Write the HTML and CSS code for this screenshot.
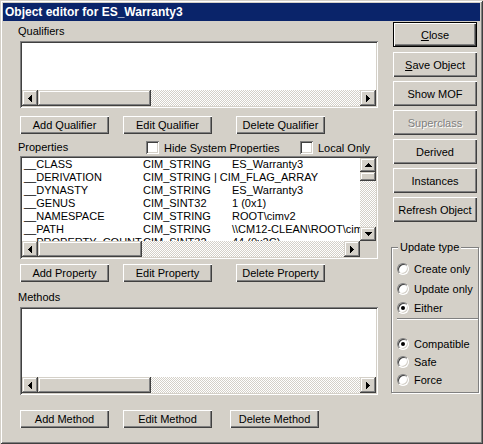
FILE: index.html
```html
<!DOCTYPE html>
<html>
<head>
<meta charset="utf-8">
<link rel="stylesheet" href="styles.css">
</head>
<body>
<div class="window">
  <div class="titlebar">Object editor for ES_Warranty3</div>
  <div class="client">
    <div class="leftcol">
      <div class="label lbl-q">Qualifiers</div>
      <div class="listbox lb-q">
        <div class="content"></div>
        <div class="hscroll">
          <div class="sbtn"><svg width="4" height="7" viewBox="0 0 4 7"><path d="M3 0h1v7h-1zM2 1h1v5h-1zM1 2h1v3h-1zM0 3h1v1h-1z"/></svg></div>
          <div class="thumb thumb-h"></div>
          <div class="track"></div>
          <div class="sbtn"><svg width="4" height="7" viewBox="0 0 4 7"><path d="M0 0h1v7H0zM1 1h1v5H1zM2 2h1v3H2zM3 3h1v1H3z"/></svg></div>
        </div>
      </div>
      <div class="btnrow row-q">
        <div class="btn b1">Add Qualifier</div>
        <div class="btn b2">Edit Qualifier</div>
        <div class="btn b3">Delete Qualifier</div>
      </div>
      <div class="prophead">
        <div class="label lbl-p">Properties</div>
        <div class="check ch1"><span class="box"></span><span>Hide System Properties</span></div>
        <div class="check"><span class="box"></span><span>Local Only</span></div>
      </div>
      <div class="listbox lb-p">
        <div class="content rows">
          <div class="row"><span class="c1">__CLASS</span><span class="c2">CIM_STRING</span><span class="c3">ES_Warranty3</span></div>
          <div class="row"><span class="c1">__DERIVATION</span><span class="c2">CIM_STRING | CIM_FLAG_ARRAY</span><span class="c3"></span></div>
          <div class="row"><span class="c1">__DYNASTY</span><span class="c2">CIM_STRING</span><span class="c3">ES_Warranty3</span></div>
          <div class="row"><span class="c1">__GENUS</span><span class="c2">CIM_SINT32</span><span class="c3">1 (0x1)</span></div>
          <div class="row"><span class="c1">__NAMESPACE</span><span class="c2">CIM_STRING</span><span class="c3">ROOT\cimv2</span></div>
          <div class="row"><span class="c1">__PATH</span><span class="c2">CIM_STRING</span><span class="c3">\\CM12-CLEAN\ROOT\cimv2:ES_Warranty3</span></div>
          <div class="row"><span class="c1">__PROPERTY_COUNT</span><span class="c2">CIM_SINT32</span><span class="c3">44 (0x2C)</span></div>
        </div>
        <div class="vscroll">
          <div class="sbtn vbtn"><svg width="7" height="4" viewBox="0 0 7 4"><path d="M3 0h1v1H3zM2 1h3v1H2zM1 2h5v1H1zM0 3h7v1H0z"/></svg></div>
          <div class="thumb thumb-v"></div>
          <div class="track"></div>
          <div class="sbtn vbtn"><svg width="7" height="4" viewBox="0 0 7 4"><path d="M0 0h7v1H0zM1 1h5v1H1zM2 2h3v1H2zM3 3h1v1H3z"/></svg></div>
        </div>
        <div class="hscroll">
          <div class="sbtn"><svg width="4" height="7" viewBox="0 0 4 7"><path d="M3 0h1v7h-1zM2 1h1v5h-1zM1 2h1v3h-1zM0 3h1v1h-1z"/></svg></div>
          <div class="thumb thumb-hp"></div>
          <div class="track"></div>
          <div class="sbtn"><svg width="4" height="7" viewBox="0 0 4 7"><path d="M0 0h1v7H0zM1 1h1v5H1zM2 2h1v3H2zM3 3h1v1H3z"/></svg></div>
        </div>
        <div class="corner"></div>
      </div>
      <div class="btnrow row-p">
        <div class="btn b1">Add Property</div>
        <div class="btn b2">Edit Property</div>
        <div class="btn b3">Delete Property</div>
      </div>
      <div class="label lbl-m">Methods</div>
      <div class="listbox lb-m">
        <div class="content"></div>
        <div class="hscroll">
          <div class="sbtn"><svg width="4" height="7" viewBox="0 0 4 7"><path d="M3 0h1v7h-1zM2 1h1v5h-1zM1 2h1v3h-1zM0 3h1v1h-1z"/></svg></div>
          <div class="thumb thumb-h"></div>
          <div class="track"></div>
          <div class="sbtn"><svg width="4" height="7" viewBox="0 0 4 7"><path d="M0 0h1v7H0zM1 1h1v5H1zM2 2h1v3H2zM3 3h1v1H3z"/></svg></div>
        </div>
      </div>
      <div class="btnrow row-m">
        <div class="btn b1">Add Method</div>
        <div class="btn b2">Edit Method</div>
        <div class="btn b3m">Delete Method</div>
      </div>
    </div>
    <div class="rightcol">
      <div class="btn rbtn default"><span><u>C</u>lose</span></div>
      <div class="btn rbtn first"><span><u>S</u>ave Object</span></div>
      <div class="btn rbtn">Show MOF</div>
      <div class="btn rbtn disabled">Superclass</div>
      <div class="btn rbtn">Derived</div>
      <div class="btn rbtn">Instances</div>
      <div class="btn rbtn">Refresh Object</div>
      <div class="group">
        <span class="legend">Update type</span>
        <div class="radio r1"><span class="dot"></span><span>Create only</span></div>
        <div class="radio r2"><span class="dot"></span><span>Update only</span></div>
        <div class="radio r3"><span class="dot on"></span><span>Either</span></div>
        <div class="sep"></div>
        <div class="radio r4"><span class="dot on"></span><span>Compatible</span></div>
        <div class="radio r5"><span class="dot"></span><span>Safe</span></div>
        <div class="radio r5"><span class="dot"></span><span>Force</span></div>
      </div>
    </div>
  </div>
</div>
</body>
</html>
```
FILE: styles.css
```css
* { box-sizing: border-box; }
html, body { margin: 0; padding: 0; }
body {
  width: 483px;
  height: 444px;
  overflow: hidden;
  background: #d4d0c8;
  font-family: "Liberation Sans", Arial, sans-serif;
  font-size: 11px;
  color: #000;
}
.window {
  width: 483px;
  height: 444px;
  padding: 3px;
  background: #d4d0c8;
  box-shadow: inset 1px 1px 0 #d4d0c8, inset -1px -1px 0 #404040,
              inset 2px 2px 0 #fff, inset -2px -2px 0 #808080;
}
.titlebar {
  height: 18px;
  line-height: 18px;
  padding-left: 2px;
  background: #0a246a;
  color: #fff;
  font-weight: bold;
  font-size: 12px;
  white-space: nowrap;
}
.client {
  display: flex;
  padding-left: 15px;
}
.leftcol {
  width: 360px;
  display: flex;
  flex-direction: column;
}
.label {
  height: 13px;
  line-height: 13px;
  white-space: nowrap;
}
.lbl-q { margin-top: 4px; }
.lbl-m { margin-top: 9px; }

.listbox {
  margin-left: 2px;
  width: 358px;
  background: #fff;
  padding: 2px;
  box-shadow: inset 1px 1px 0 #808080, inset -1px -1px 0 #fff,
              inset 2px 2px 0 #404040, inset -2px -2px 0 #d4d0c8;
  display: grid;
}
.lb-q { margin-top: 3px; height: 67px; grid-template-rows: 1fr 16px; }
.lb-m { margin-top: 3px; height: 88px; grid-template-rows: 1fr 16px; }
.lb-p {
  margin-top: 2px;
  height: 103px;
  grid-template-columns: 1fr 16px;
  grid-template-rows: 1fr 16px;
}
.content { background: #fff; overflow: hidden; }

.hscroll { display: flex; height: 16px; }
.vscroll { display: flex; flex-direction: column; width: 16px; }
.sbtn, .thumb {
  background: #d4d0c8;
  box-shadow: inset -1px -1px 0 #404040, inset 1px 1px 0 #d4d0c8,
              inset -2px -2px 0 #808080, inset 2px 2px 0 #fff;
}
.sbtn {
  width: 16px;
  height: 16px;
  flex: none;
  display: flex;
  align-items: center;
  justify-content: center;
}
.sbtn svg { display: block; shape-rendering: crispEdges; fill: #000; }
.vbtn { height: 14px; }
.thumb { flex: none; }
.thumb-h { width: 113px; }
.thumb-hp { width: 104px; }
.thumb-v { height: 9px; width: 16px; }
.track {
  flex: 1;
  background: repeating-conic-gradient(#fff 0 25%, #d4d0c8 0 50%) 0 0 / 2px 2px;
}
.corner { background: #d4d0c8; }

.rows { padding-left: 2px; }
.row {
  display: flex;
  height: 13px;
  line-height: 13px;
  white-space: nowrap;
}
.c1 { width: 119px; flex: none; }
.c2 { width: 89px; flex: none; }
.c3 { flex: none; }

.btnrow { display: flex; margin-left: 2px; }
.row-q { margin-top: 8px; }
.row-p { margin-top: 5px; }
.row-m { margin-top: 15px; }
.btn {
  height: 18px;
  display: flex;
  align-items: center;
  justify-content: center;
  white-space: nowrap;
  background: #d4d0c8;
  box-shadow: inset 1px 1px 0 #fff, inset -1px -1px 0 #404040,
              inset -2px -2px 0 #808080;
}
.b1, .b2, .b3, .b3m { width: 89px; flex: none; }
.b2 { margin-left: 14px; }
.b3 { margin-left: 24px; }
.b3m { margin-left: 18px; }

.prophead {
  display: flex;
  margin-top: 7px;
  height: 13px;
}
.lbl-p { width: 128px; }
.check {
  display: flex;
  align-items: center;
  white-space: nowrap;
  height: 13px;
}
.ch1 { width: 154px; }
.box {
  width: 13px;
  height: 13px;
  margin-right: 5px;
  background: #fff;
  box-shadow: inset 1px 1px 0 #808080, inset -1px -1px 0 #fff,
              inset 2px 2px 0 #404040, inset -2px -2px 0 #d4d0c8;
}

.rightcol {
  width: 88px;
  margin-left: 13px;
  display: flex;
  flex-direction: column;
}
.rbtn {
  width: 84px;
  height: 25px;
  margin-left: 2px;
  margin-top: 4px;
}
.rbtn.default {
  margin-top: 1px;
  box-shadow: inset 0 0 0 1px #000, inset 2px 2px 0 #fff,
              inset -2px -2px 0 #404040, inset -3px -3px 0 #808080;
}
.rbtn.first { margin-top: 5px; }
.rbtn.disabled {
  color: #808080;
  text-shadow: 1px 1px 0 #fff;
}

.group {
  position: relative;
  margin-top: 25px;
  width: 88px;
  height: 146px;
  border: 1px solid #808080;
  box-shadow: inset 1px 1px 0 #fff, 1px 1px 0 #fff;
  padding: 13px 0 0 5px;
}
.legend {
  position: absolute;
  left: 6px;
  top: -7px;
  padding: 0 2px;
  background: #d4d0c8;
  line-height: 13px;
  white-space: nowrap;
}
.radio {
  display: flex;
  align-items: center;
  height: 16px;
  white-space: nowrap;
}
.r2 { margin-top: 4px; }
.r3 { margin-top: 3px; }
.r4 { margin-top: 16px; }
.r5 { margin-top: 2px; }
.dot {
  position: relative;
  width: 12px;
  height: 12px;
  margin-right: 5px;
  border-radius: 50%;
  background: #fff;
  border: 1px solid;
  border-color: #808080 #fff #fff #808080;
  box-shadow: inset 1px 1px 0 #404040, inset -1px -1px 0 #d4d0c8;
}
.dot.on::after {
  content: "";
  position: absolute;
  left: 3px;
  top: 3px;
  width: 4px;
  height: 4px;
  border-radius: 50%;
  background: #000;
}
.sep {
  margin-top: 2px;
  width: 81px;
  height: 2px;
  border-top: 1px solid #808080;
  border-bottom: 1px solid #fff;
}
```
